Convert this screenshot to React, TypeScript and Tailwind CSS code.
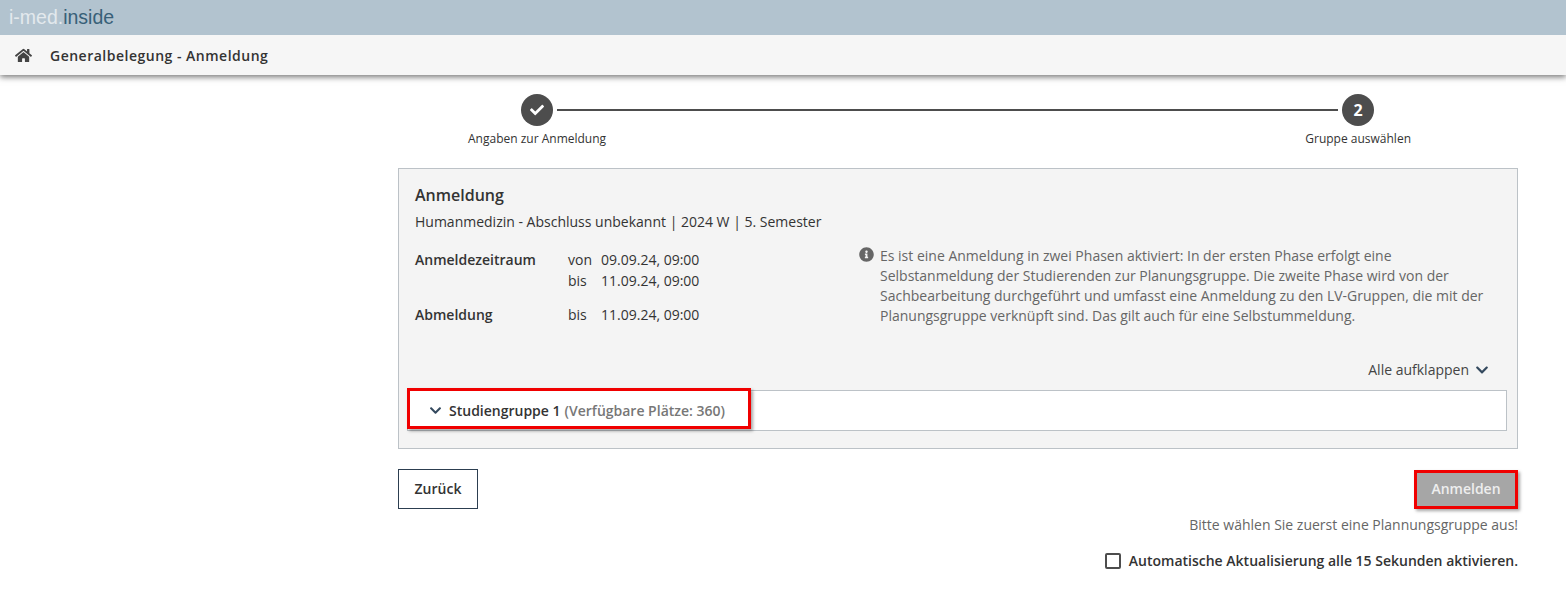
import React from 'react';
import { FaCheck, FaChevronDown, FaHome, FaInfoCircle } from 'react-icons/fa';

const App = () => {
  return (
    <div className="min-h-[597px] bg-white font-['Open_Sans',sans-serif] text-[14px] text-[#333] overflow-hidden">
      {/* Top bar */}
      <div className="relative z-10 h-[35px] bg-[#b2c3cf] pl-[9px] flex items-center font-['Liberation_Sans',sans-serif] text-[19.5px] leading-none">
        <span className="text-[#e3e9ed]">i-med.</span>
        <span className="text-[#386078]">inside</span>
      </div>
      <div className="relative h-[40px] bg-[#f6f6f6] flex items-center pl-[15px] shadow-[0_2px_6px_rgba(0,0,0,0.55)]">
        <FaHome className="text-[#444] text-[17px]" />
        <span className="ml-[18px] font-semibold tracking-[0.5px] text-[#333]">Generalbelegung - Anmeldung</span>
      </div>

      <div className="ml-[398px] w-[1120px]">
        {/* Stepper */}
        <div className="pt-[19px] flex items-center pl-[123px] pr-[144px]">
          <div className="w-8 h-8 rounded-full bg-[#4d4d4d] flex items-center justify-center text-white">
            <FaCheck className="text-[14px]" />
          </div>
          <div className="flex-1 h-[2px] bg-[#4d4d4d] mx-1"></div>
          <div className="w-8 h-8 rounded-full bg-[#4d4d4d] flex items-center justify-center text-white font-bold text-[16px]">2</div>
        </div>
        <div className="flex justify-between pl-[70px] pr-[107px] pt-[4px] text-[12px] leading-[18px]">
          <span>Angaben zur Anmeldung</span>
          <span>Gruppe auswählen</span>
        </div>

        {/* Card */}
        <div className="mt-[20px] h-[281px] border border-[#bcc2c7] bg-[#f4f4f4] pt-[15px] pl-[8px] pr-[10px]">
          <div className="px-[8px]">
            <h2 className="text-[16px] leading-[22px] font-semibold">Anmeldung</h2>
            <p className="mt-[6px] leading-[20px]">Humanmedizin - Abschluss unbekannt | 2024 W | 5. Semester</p>
            <div className="mt-[14px] flex h-[100px]">
              <div className="w-[444px] shrink-0 pt-[4px]">
                <div className="flex leading-[20px]">
                  <span className="w-[153px] font-semibold">Anmeldezeitraum</span>
                  <div className="grid grid-cols-[33px_auto] gap-y-[1px]">
                    <span>von</span>
                    <span>09.09.24, 09:00</span>
                    <span>bis</span>
                    <span>11.09.24, 09:00</span>
                  </div>
                </div>
                <div className="mt-[14px] flex leading-[20px]">
                  <span className="w-[153px] font-semibold">Abmeldung</span>
                  <span className="w-[33px]">bis</span>
                  <span>11.09.24, 09:00</span>
                </div>
              </div>
              <div className="flex-1 flex text-[#666] leading-[20px]">
                <FaInfoCircle className="text-[15px] shrink-0 mt-[1px] mr-[6px] text-[#666]" />
                <p className="w-[610px]">
                  Es ist eine Anmeldung in zwei Phasen aktiviert: In der ersten Phase erfolgt eine Selbstanmeldung der
                  Studierenden zur Planungsgruppe. Die zweite Phase wird von der Sachbearbeitung durchgeführt und umfasst
                  eine Anmeldung zu den LV-Gruppen, die mit der Planungsgruppe verknüpft sind. Das gilt auch für eine
                  Selbstummeldung.
                </p>
              </div>
            </div>
            <div className="mt-[14px] flex items-center justify-end pr-[10px] leading-[20px] text-[#444]">
              <span>Alle aufklappen</span>
              <FaChevronDown className="ml-[6px] text-[14px] text-[#34495e]" />
            </div>
          </div>

          {/* Accordion */}
          <div className="relative mt-[10px] h-[41px] border border-[#bcc2c7] bg-white flex items-center pl-[21px]">
            <FaChevronDown className="text-[13px] text-[#34495e]" />
            <span className="ml-[7px] font-semibold">Studiengruppe 1</span>
            <span className="ml-[4px] font-semibold text-[#777]">(Verfügbare Plätze: 360)</span>
            <div className="absolute -left-px -top-[3px] w-[344px] h-[41px] border-[3px] border-[#f00000] shadow-[2px_2px_3px_rgba(0,0,0,0.35)]"></div>
          </div>
        </div>

        {/* Actions */}
        <div className="mt-[20px] flex items-start justify-between">
          <button className="h-[40px] w-[80px] pb-[2px] border border-[#2c3e50] bg-white font-semibold text-[#333]">Zurück</button>
          <button className="mt-[1px] h-[39px] w-[104px] pb-[2px] border-[3px] border-[#f00000] bg-[#a6a6a6] font-semibold text-[#eee] shadow-[2px_2px_3px_rgba(0,0,0,0.35)]">Anmelden</button>
        </div>
        <p className="mt-[6px] text-right leading-[20px] text-[#666]">Bitte wählen Sie zuerst eine Plannungsgruppe aus!</p>
        <div className="mt-[16px] flex items-center justify-end leading-[20px]">
          <span className="w-4 h-4 border-2 border-[#4d4d4d] rounded-[2px] bg-white mr-2"></span>
          <span className="font-semibold">Automatische Aktualisierung alle 15 Sekunden aktivieren.</span>
        </div>
      </div>
    </div>
  );
};

export default App;
